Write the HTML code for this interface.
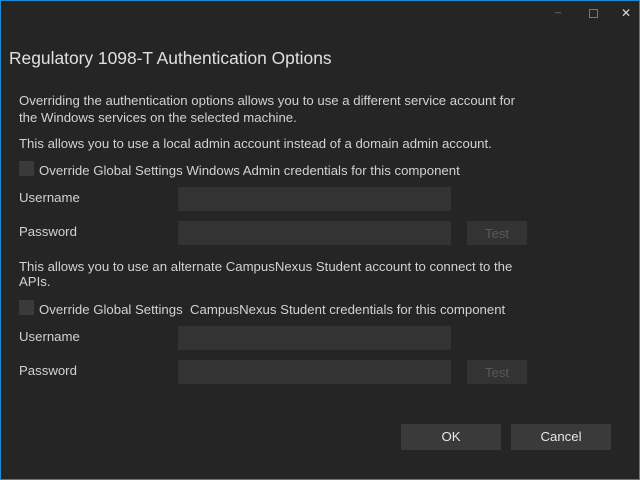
<!DOCTYPE html>
<html><head><style>
html,body{margin:0;padding:0;}
body{width:640px;height:480px;background:#252526;position:relative;overflow:hidden;font-family:"Liberation Sans",sans-serif;color:#d2d2d2;font-size:13.2px;}
.frame{position:absolute;left:0;top:0;width:638px;height:478px;border:1px solid #1c8ad6;}
.a{position:absolute;white-space:nowrap;}
.inp{position:absolute;background:#333333;width:273px;height:24px;left:178px;}
.btn{position:absolute;background:#333333;color:#5a5a5a;text-align:center;width:60px;height:24px;line-height:26px;left:467px;}
.cb{position:absolute;left:19px;width:15px;height:15px;background:#3a3a3a;}
.big{position:absolute;top:424px;width:100px;height:26px;background:#3a3a3a;color:#e6e6e6;text-align:center;line-height:26px;}
</style></head><body>
<div class="frame"></div>
<div class="a" style="left:555px;top:2px;color:#777;font-size:11px">_</div>
<div class="a" style="left:589px;top:9px;width:7px;height:7px;border:1px solid #777"></div>
<div class="a" style="left:621px;top:6px;color:#ddd;font-size:12px">✕</div>
<div class="a" style="left:9px;top:48px;font-size:17.4px;color:#e0e0e0">Regulatory 1098-T Authentication Options</div>
<div class="a" style="left:19px;top:92px;line-height:17px">Overriding the authentication options allows you to use a different service account for<br>the Windows services on the selected machine.</div>
<div class="a" style="left:19px;top:136px">This allows you to use a local admin account instead of a domain admin account.</div>
<div class="cb" style="top:161px"></div>
<div class="a" style="left:39px;top:163px">Override Global Settings Windows Admin credentials for this component</div>
<div class="a" style="left:19px;top:190px">Username</div>
<div class="inp" style="top:187px"></div>
<div class="a" style="left:19px;top:224px">Password</div>
<div class="inp" style="top:221px"></div>
<div class="btn" style="top:221px">Test</div>
<div class="a" style="left:19px;top:259px;line-height:15px">This allows you to use an alternate CampusNexus Student account to connect to the<br>APIs.</div>
<div class="cb" style="top:300px"></div>
<div class="a" style="left:39px;top:302px">Override Global Settings &nbsp;CampusNexus Student credentials for this component</div>
<div class="a" style="left:19px;top:329px">Username</div>
<div class="inp" style="top:326px"></div>
<div class="a" style="left:19px;top:363px">Password</div>
<div class="inp" style="top:360px"></div>
<div class="btn" style="top:360px">Test</div>
<div class="big" style="left:401px">OK</div>
<div class="big" style="left:511px">Cancel</div>
</body></html>
